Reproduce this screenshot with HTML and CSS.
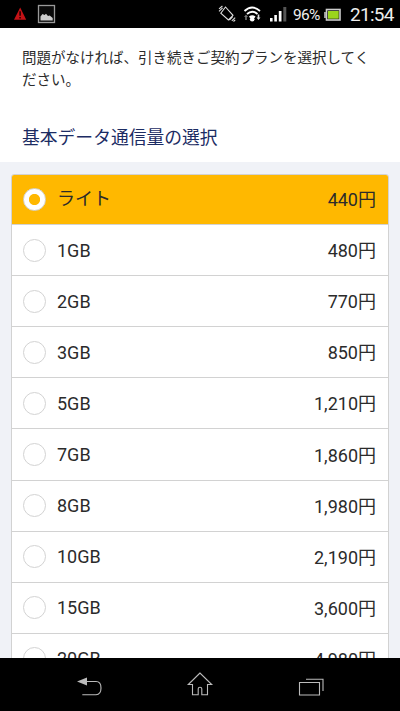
FILE: index.html
```html
<!DOCTYPE html>
<html lang="ja">
<head>
<meta charset="utf-8">
<title>基本データ通信量の選択</title>
<link rel="stylesheet" href="styles.css">
</head>
<body>
<div class="screen">
  <header class="status">
    <svg class="status-left" width="60" height="28" viewBox="0 0 60 28">
      <path d="M20.2 7.5L26.2 19.7H14Z" fill="#c51216"/>
      <path d="M20.1 11.2v4.6M20.1 17v1.4" stroke="#210000" stroke-width="1.5"/>
      <rect x="38.5" y="5.5" width="16" height="17" fill="#0a0a0a" stroke="#999" stroke-width="1.3"/>
      <path d="M40.5 20.5v-4l2-2.5 2 1 1.5-1.3 2 2.3 1.7-.6 3 2.6v2.5z" fill="#ccc"/>
    </svg>
    <svg class="status-icons" width="72" height="28" viewBox="218 0 72 28">
      <g fill="none" stroke="#ddd" stroke-width="1.1">
        <path d="M225.500 7l7.500 8.300-4.600 4.700-7.600-6.800zM232.700 16.500l-3.300 3.500"/>
        <path d="M219 8.800l3.400-2.800M219 11.300l3.600-3.500M231.800 20.800l3.400-3.200M233.500 21.500l1.700-1.700"/>
      </g>
      <g fill="none" stroke="#fff" stroke-width="1.8">
        <path d="M244.500 11q7.500-7 15.500 0"/>
        <path d="M247 14q5.200-4.600 10.500 0"/>
      </g>
      <path d="M249 16.500q3.200-2.500 6.500 0l-1 1.500h-4.500z" fill="#fff"/>
      <circle cx="252.200" cy="19.300" r="2.300" fill="#fff"/>
      <path d="M244 17l2-2.500 2 2.500h-1.200v3h-1.600v-3z" fill="#777"/>
      <path d="M256.500 17.500l2 2.500 2-2.500h-1.200v-3h-1.600v3z" fill="#ddd"/>
      <path d="M270 18h2.600v3.500H270zM274.300 15h2.600v6.500h-2.600zM278.800 11h2.700v10.500h-2.700z" fill="#fff"/>
      <path d="M283.300 7h3v14.500h-3z" fill="#555"/>
    </svg>
    <span class="percent">96%</span>
    <svg class="battery" width="17" height="28" viewBox="324 0 17 28">
      <rect x="326.500" y="9.500" width="13.500" height="10.500" fill="#111" stroke="#ccc" stroke-width="1.600"/>
      <path d="M325 12v6" stroke="#ccc" stroke-width="1.500"/>
      <rect x="328" y="11" width="10.700" height="7.700" fill="#9bd51c"/>
    </svg>
    <span class="clock">21:54</span>
  </header>
  <main class="content">
    <section class="intro">
      <p class="lead">問題がなければ、引き続きご契約プランを選択してく<br>ださい。</p>
      <h1 class="title">基本データ通信量の選択</h1>
    </section>
    <ul class="plans">
      <li class="plan selected"><i class="radio"></i><span class="name">ライト</span><span class="price">440<b class="yen">円</b></span></li>
      <li class="plan"><i class="radio"></i><span class="name">1GB</span><span class="price">480<b class="yen">円</b></span></li>
      <li class="plan"><i class="radio"></i><span class="name">2GB</span><span class="price">770<b class="yen">円</b></span></li>
      <li class="plan"><i class="radio"></i><span class="name">3GB</span><span class="price">850<b class="yen">円</b></span></li>
      <li class="plan"><i class="radio"></i><span class="name">5GB</span><span class="price">1,210<b class="yen">円</b></span></li>
      <li class="plan"><i class="radio"></i><span class="name">7GB</span><span class="price">1,860<b class="yen">円</b></span></li>
      <li class="plan"><i class="radio"></i><span class="name">8GB</span><span class="price">1,980<b class="yen">円</b></span></li>
      <li class="plan"><i class="radio"></i><span class="name">10GB</span><span class="price">2,190<b class="yen">円</b></span></li>
      <li class="plan"><i class="radio"></i><span class="name">15GB</span><span class="price">3,600<b class="yen">円</b></span></li>
      <li class="plan"><i class="radio"></i><span class="name">20GB</span><span class="price">4,980<b class="yen">円</b></span></li>
    </ul>
  </main>
  <nav class="navbar">
    <svg width="400" height="53" viewBox="0 658 400 53" fill="none" stroke="#bbb" stroke-width="1.100">
      <path d="M77 681.500l10-4v8z" fill="#bbb" stroke="none"/>
      <path d="M86 681.500h10q5 0 5 6.500t-5 6.700H82.300"/>
      <path d="M200 673l-11.700 11.500h4.200v10.200h5.700v-6q0-1.400 1.800-1.400t1.800 1.400v6h5.700v-10.200h4.200z"/>
      <path d="M299.500 682.500h20v12.500h-20zM306 679.300h17v11.700"/>
    </svg>
  </nav>
</div>
</body>
</html>
```
FILE: styles.css
```css
* { box-sizing: border-box; }

body {
  margin: 0;
  font-family: Roboto, "Noto Sans CJK JP", sans-serif;
  color: #2b2b2b;
}

.screen {
  width: 400px;
  height: 711px;
  display: flex;
  flex-direction: column;
  overflow: hidden;
  background: #000;
}

.status {
  flex: none;
  height: 28px;
  display: flex;
  align-items: center;
  color: #eee;
  background: #000;
}

.status svg { flex: none; }
.status-icons { margin-left: auto; }

.percent {
  width: 31px;
  margin-left: 3px;
  font-size: 15.5px;
  line-height: 28px;
  padding-top: 2px;
  letter-spacing: -0.7px;
  white-space: nowrap;
}

.clock {
  width: 50px;
  margin: 0 0 0 9px;
  padding-top: 1px;
  font-size: 19px;
  line-height: 28px;
  letter-spacing: -0.7px;
}

.content {
  flex: 1;
  min-height: 0;
  overflow: hidden;
  background: #f0f2f7;
}

.navbar { flex: none; }
.navbar svg { display: block; }

.intro {
  height: 134px;
  padding: 20px 0 0 22px;
  background: #fff;
}

.lead {
  margin: 0;
  font-size: 14.5px;
  line-height: 22px;
  white-space: nowrap;
}

.title {
  margin: 33px 0 0;
  font-size: 17.8px;
  font-weight: 400;
  line-height: 26px;
  color: #1c2c63;
}

.plans {
  width: 378px;
  margin: 11.500px 0 0 11px;
  padding: 0;
  list-style: none;
  border: 1px solid #d2d2d2;
  border-radius: 3px;
  background: #fff;
  overflow: hidden;
}

.plan {
  height: 51.100px;
  display: flex;
  align-items: center;
  padding: 0 12px 0 11px;
  border-bottom: 1px solid #d2d2d2;
  font-size: 18px;
  line-height: 26px;
}

.selected {
  height: 50.600px;
  background: #ffb800;
}

.radio {
  width: 23px;
  height: 23px;
  flex: none;
  margin-right: 11px;
  border: 1px solid #d3d3d3;
  border-radius: 50%;
  background: #fff;
}

.selected .radio {
  background: radial-gradient(circle, #ffb800 5.200px, #fff 6px);
}

.name { padding-top: 1px; }

.price {
  margin-left: auto;
  padding-top: 2px;
}

.selected .name { padding: 0; }

.yen {
  font-weight: 400;
  line-height: 1;
}
```
